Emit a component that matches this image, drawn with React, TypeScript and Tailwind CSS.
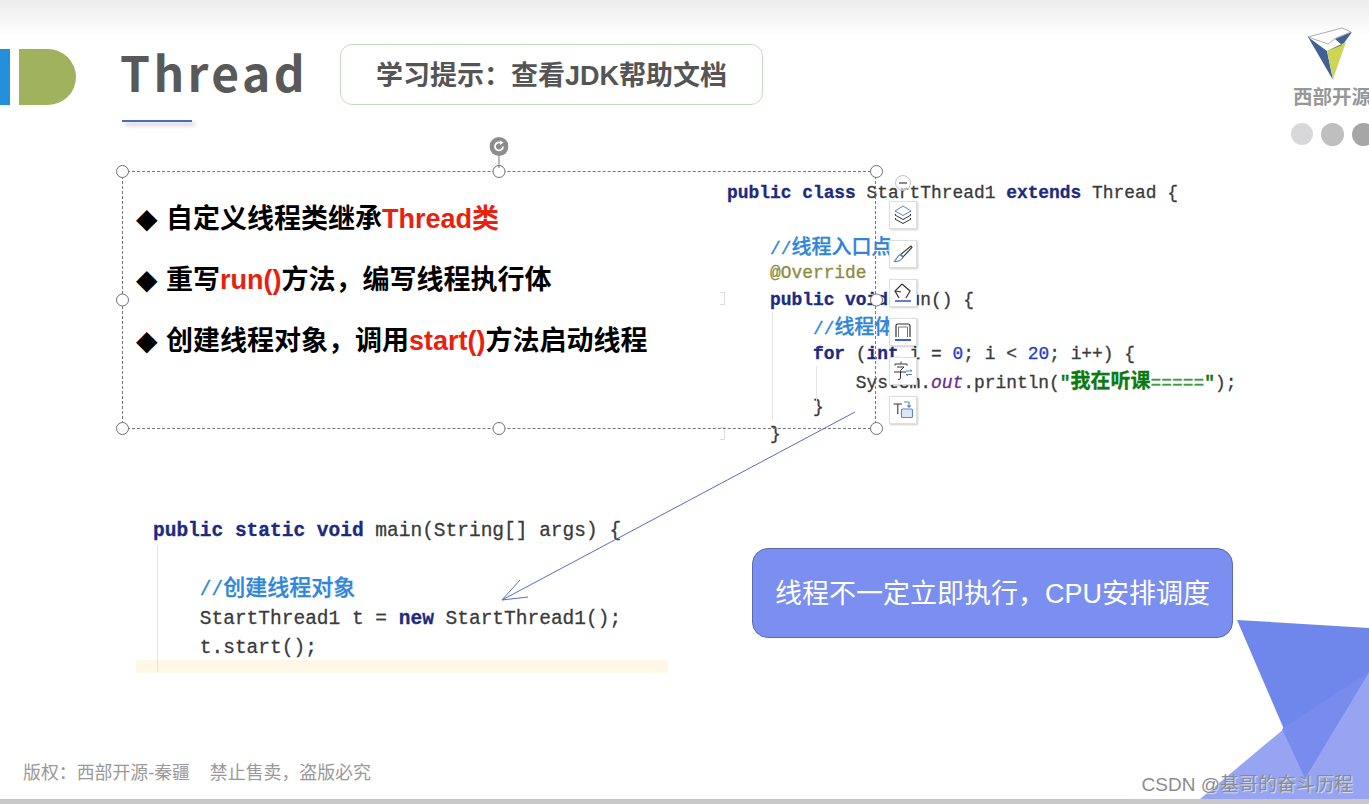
const mono = "font-['Liberation_Mono','Noto_Sans_CJK_SC',monospace]";
const cjk = "font-['Liberation_Sans','Noto_Sans_CJK_SC',sans-serif]";

const K = ({ children }: { children: React.ReactNode }) => <span className="text-[#1c2a80] font-bold">{children}</span>;
const C = ({ children, big }: { children: React.ReactNode; big?: boolean }) => (
  <span className={`text-[#2f86d8] ${big ? "relative -top-[2px]" : ""}`}>
    //<span className={`${cjk} font-medium ${big ? "text-[22px]" : "text-[20px]"}`}>{children}</span>
  </span>
);
const Num = ({ children }: { children: React.ReactNode }) => <span className="text-[#2a3cc8]">{children}</span>;
const R = ({ children }: { children: React.ReactNode }) => <span className="text-[#e8210f]">{children}</span>;

function Handle({ cls }: { cls: string }) {
  return <div className={`absolute w-[13px] h-[13px] rounded-full border border-[#6f6f6f] bg-white ${cls}`} />;
}

function Tool({ children }: { children: React.ReactNode }) {
  return (
    <div className="w-[28px] h-[28px] bg-white border border-[#dedede] shadow-[1px_1px_2px_rgba(0,0,0,0.2)] flex items-center justify-center">
      {children}
    </div>
  );
}

function Bullet({ children }: { children: React.ReactNode }) {
  return (
    <div className="flex items-center gap-[6px]">
      <span className="w-[24px] text-[28px] leading-[40px] font-['DejaVu_Sans',sans-serif]">◆</span>
      <span>{children}</span>
    </div>
  );
}

const icons = [
  <svg key="a" width="22" height="22" viewBox="0 0 22 22" fill="none" strokeWidth="1">
    <path d="M11 2 L19 7 L11 11.5 L3 7 Z" stroke="#5b86c8" />
    <path d="M4 10 L3 11 L11 15.5 L19 11 L18 10" stroke="#333" />
    <path d="M4 14 L3 15 L11 19.5 L19 15 L18 14" stroke="#333" />
  </svg>,
  <svg key="b" width="22" height="22" viewBox="0 0 22 22" fill="none" strokeWidth="1.1">
    <path d="M19 3 L20 4.5 L11 14 L8.5 11.5 Z" stroke="#333" />
    <path d="M8.5 11.5 L11 14 C10 17 6 19 2.5 18.5 C4 17 5 13 8.5 11.5 Z" stroke="#5b86c8" />
  </svg>,
  <svg key="c" width="22" height="22" viewBox="0 0 22 22" fill="none" strokeWidth="1.2">
    <path d="M10 2 L18 9 L14 16 M7 16 L3 9 L10 2" stroke="#333" />
    <path d="M3 9 L9 10" stroke="#333" />
    <path d="M3 19 L19 19" stroke="#5a6fc8" strokeWidth="1.8" />
  </svg>,
  <svg key="d" width="22" height="22" viewBox="0 0 22 22" fill="none">
    <path d="M4 16 L4 5 Q4 3 6 3 L16 3 Q18 3 18 5 L18 16" stroke="#333" strokeWidth="1.2" />
    <path d="M6.5 16 L6.5 6 L15.5 6 L15.5 16" stroke="#777" strokeWidth="1" />
    <path d="M3 19 L19 19" stroke="#3f5fd0" strokeWidth="2" />
  </svg>,
  <svg key="e" width="22" height="22" viewBox="0 0 22 22" fill="none" strokeWidth="1">
    <path d="M9 1.5 L9 3.5 M3 5.5 L3 4 L15 4 L15 5.5 M5 7 L12 7 L8.5 10.5 M2 12 L14 12 M8.5 10.5 L8.5 18 Q8.5 20 6 19.5" stroke="#333" />
    <path d="M14 11 L20 11 L18 9.5 M20 14.5 L14 14.5 L16 16" stroke="#5b86c8" />
  </svg>,
  <svg key="f" width="22" height="22" viewBox="0 0 22 22" fill="none" strokeWidth="1.1">
    <path d="M1.5 5 L10 5 M5.8 5 L5.8 15" stroke="#333" />
    <path d="M12 3 L17 3 L17 8 M15.3 6.5 L17 8.2 L18.7 6.5" stroke="#5b86c8" />
    <rect x="9.5" y="10" width="11" height="8.5" rx="1" stroke="#5b86c8" fill="#dce8f6" />
  </svg>,
];

export default function App() {
  return (
    <div className={`relative w-[1369px] h-[804px] overflow-hidden bg-white flex flex-col ${cjk}`}>
      {/* page decoration: top fade, corner triangles */}
      <div className="absolute inset-x-0 top-0 h-[36px] bg-gradient-to-b from-[#ececec] to-white" />
      <svg className="absolute inset-0" width="1369" height="804" fill="none">
        <path d="M1200 799 L1285 728 L1369 672 L1369 799 Z" fill="#96a4f2" />
        <path d="M1237 620 L1369 628 L1369 672 L1305 778 Z" fill="#6f87ea" />
        <path d="M1282 729 L1369 672 L1305 778 Z" fill="#788cee" />
      </svg>

      {/* header */}
      <header className="relative h-[137px] shrink-0 flex justify-between items-start">
        <div className="flex items-start pt-[44px]">
          <div className="flex gap-[9px] pt-[5px]">
            <div className="w-[10px] h-[56px] bg-[#2390dc]" />
            <div className="w-[57px] h-[56px] bg-[#a0b25e] rounded-r-[28px]" />
          </div>
          <div className="ml-[44px] -mt-[7px] w-[187px] font-['Noto_Sans_CJK_SC',sans-serif] font-bold text-[48px] leading-[68px] tracking-[3.4px] text-[#595959]">
            Thread
            <div className="ml-[2px] mt-[15px] w-[70px] h-[2px] bg-[#4f6db0] shadow-[3px_3px_4px_rgba(0,0,0,0.3)]" />
          </div>
          <div className="ml-[33px] w-[423px] h-[61px] pt-[3px] rounded-[12px] border-[1.5px] border-[#c3dcc0] flex items-center justify-center">
            <span className="font-bold text-[27px] text-[#555555]">学习提示：查看JDK帮助文档</span>
          </div>
        </div>
        <div className="w-[76px] shrink-0 flex flex-col items-start pt-[26px]">
          <svg className="ml-[13px]" width="48" height="56" viewBox="0 0 48 56">
            <path d="M2 11 L36 2 L45 6 L30 12 L22 18 L2 11 Z" fill="#ffffff" stroke="#8a8a8a" strokeWidth="0.7" />
            <path d="M2 11 L21 25 L27 54 Z" fill="#3f6195" />
            <path d="M21 25 L40 16 L27 53 Z" fill="#cdd456" />
            <path d="M29 13 L46 6 L38 17 L21 25 L36 19 Z" fill="#3f6195" />
          </svg>
          <div className="mt-[3px] text-[19.5px] leading-[25px] font-bold text-[#979797] whitespace-nowrap">西部开源</div>
          <div className="-ml-[2px] mt-[13px] flex gap-[8px]">
            <div className="w-[22px] h-[22px] shrink-0 rounded-full bg-[#d8d8da]" />
            <div className="w-[23px] h-[23px] shrink-0 rounded-full bg-[#bfbfbf]" />
            <div className="w-[23px] h-[23px] shrink-0 rounded-full bg-[#a6a6a6]" />
          </div>
        </div>
      </header>

      {/* slide canvas: objects placed freely on the slide */}
      <main className="relative flex-1">
        {/* code block: thread class */}
        <div className={`absolute left-[727px] top-[43px] text-[17.9px] grid auto-rows-[26.8px] items-center whitespace-pre text-[#3a3a3a] [-webkit-text-stroke:0.3px_currentColor] ${mono}`}>
          <div><K>public class </K>StartThread1 <K>extends </K>Thread {"{"}</div>
          <div>&nbsp;</div>
          <div>{"    "}<C>线程入口点</C></div>
          <div className="text-[#8f8b3c]">{"    "}@Override</div>
          <div>{"    "}<K>public void </K>run() {"{"}</div>
          <div>{"        "}<C>线程体</C></div>
          <div>{"        "}<K>for </K>(<K>int </K>i = <Num>0</Num>; i &lt; <Num>20</Num>; i++) {"{"}</div>
          <div>{"            "}System.<span className="italic text-[#6a2c8c]">out</span>.println(<span className="text-[#0b7a12] font-bold">"<span className={`${cjk} text-[20px]`}>我在听课</span><span className="font-normal text-[#3f9a45]">=====</span>"</span>);</div>
          <div>{"        "}{"}"}</div>
          <div>{"    "}{"}"}</div>
        </div>
        <div className="absolute left-[772px] top-[175px] w-px h-[108px] bg-[#e4e4e4]" />
        <div className="absolute left-[816px] top-[229px] w-px h-[36px] bg-[#e4e4e4]" />
        <div className="absolute left-[720px] top-[155px] w-[5px] h-[13px] border-y border-r border-[#dddddd]" />
        <div className="absolute left-[720px] top-[290px] w-[5px] h-[13px] border-y border-r border-[#dddddd]" />

        {/* code block: main */}
        <div className="absolute left-[136px] top-[523px] w-[532px] h-[13px] bg-[#fff8e6]" />
        <div className="absolute left-[157px] top-[408px] w-px h-[127px] bg-[#e2e2ea]" />
        <div className={`absolute left-[153px] top-[380px] text-[19.5px] grid auto-rows-[29.3px] items-center whitespace-pre text-[#3a3a3a] [-webkit-text-stroke:0.3px_currentColor] ${mono}`}>
          <div><K>public static void </K>main(String[] args) {"{"}</div>
          <div>&nbsp;</div>
          <div>{"    "}<C big>创建线程对象</C></div>
          <div>{"    "}StartThread1 t = <K>new </K>StartThread1();</div>
          <div>{"    "}t.start();</div>
        </div>

        {/* selected text box */}
        <div className="absolute left-[122px] top-[34px] w-[754px] h-[258px] border border-dashed border-[#777777] pt-[27px] pl-[13px]">
          <div className="flex flex-col gap-[21px] font-bold text-[27px] leading-[40px] text-black whitespace-nowrap">
            <Bullet>自定义线程类继承<R>Thread类</R></Bullet>
            <Bullet>重写<R>run()</R>方法，编写线程执行体</Bullet>
            <Bullet>创建线程对象，调用<R>start()</R>方法启动线程</Bullet>
          </div>
          <Handle cls="-left-[7px] -top-[7px]" />
          <Handle cls="left-1/2 -translate-x-1/2 -top-[7px]" />
          <Handle cls="-right-[8px] -top-[7px]" />
          <Handle cls="-left-[7px] top-1/2 -translate-y-1/2" />
          <Handle cls="-right-[8px] top-1/2 -translate-y-1/2" />
          <Handle cls="-left-[7px] -bottom-[7px]" />
          <Handle cls="left-1/2 -translate-x-1/2 -bottom-[7px]" />
          <Handle cls="-right-[8px] -bottom-[7px]" />
          {/* rotate handle */}
          <div className="absolute left-1/2 -translate-x-1/2 -top-[35px] flex flex-col items-center">
            <svg width="19" height="19" viewBox="0 0 19 19" fill="none">
              <circle cx="9.5" cy="9.5" r="9.5" fill="#8c8c8c" />
              <path d="M13.5 9.5 A4 4 0 1 1 11.5 6" stroke="#ffffff" strokeWidth="1.8" />
              <path d="M10.5 3.5 L14 5.5 L10.5 8 Z" fill="#ffffff" />
            </svg>
            <div className="w-px h-[12px] bg-[#777777]" />
          </div>
        </div>

        {/* floating toolbar */}
        <div className="absolute left-[889px] top-[38px] flex flex-col items-center gap-[10px]">
          <div className="w-[16px] h-[16px] rounded-full border border-[#c4c4c4] bg-white/60 flex items-center justify-center">
            <div className="w-[8px] h-[1.5px] bg-[#8a8a8a]" />
          </div>
          <div className="flex flex-col gap-[11px]">
            {icons.map((icon, i) => (
              <Tool key={i}>{icon}</Tool>
            ))}
          </div>
        </div>

        {/* callout */}
        <div className="absolute left-[752px] top-[411px] w-[481px] h-[90px] pt-[2px] rounded-[16px] bg-[#7b8ff0] border border-[#5a6ab5] flex items-center justify-center">
          <span className="text-[27px] text-white whitespace-nowrap">线程不一定立即执行，CPU安排调度</span>
        </div>

        {/* connector arrow */}
        <svg className="absolute left-0 top-0 pointer-events-none" width="1369" height="623" fill="none">
          <path d="M855 275 L502 463" stroke="#5a6cc0" strokeWidth="1" />
          <path d="M520 443 L502 463 L528 460" stroke="#5a6cc0" strokeWidth="1" />
        </svg>
      </main>

      {/* footer */}
      <footer className="relative h-[39px] shrink-0 flex justify-between pl-[23px] pr-[16px]">
        <div className="text-[17.9px] leading-[26px] text-[#999999] whitespace-pre">版权：西部开源-秦疆    禁止售卖，盗版必究</div>
        <div className="self-end pb-[1px] text-[19px] leading-[26px] text-[#8c8c8c] [text-shadow:1px_1px_1px_rgba(255,255,255,0.7)] whitespace-nowrap">CSDN @基哥的奋斗历程</div>
      </footer>
      <div className="relative h-[5px] shrink-0 bg-[#c8c8c8]" />
    </div>
  );
}
